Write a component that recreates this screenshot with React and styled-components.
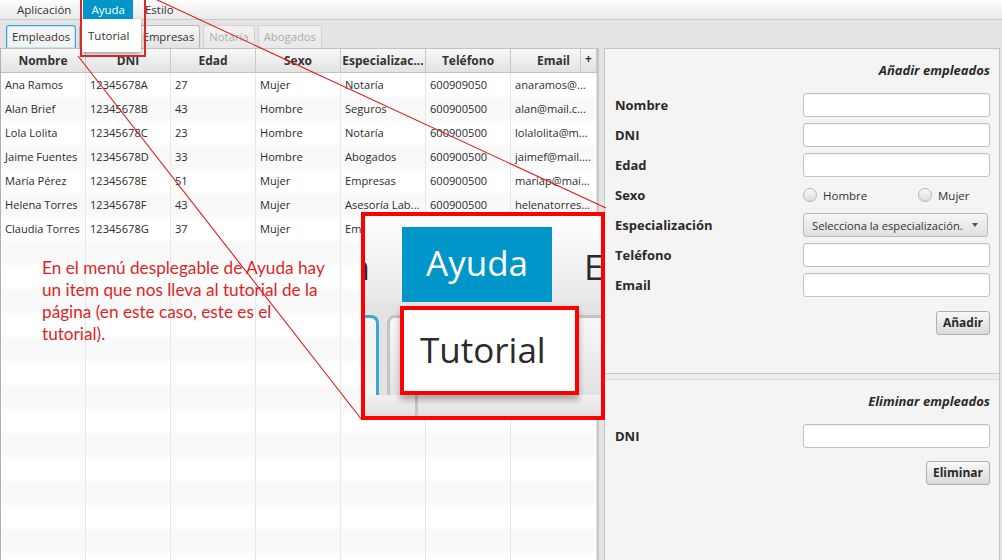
import React from 'react'
import styled, { createGlobalStyle } from 'styled-components'

const GlobalStyle = createGlobalStyle`
  html, body {
    margin: 0;
    padding: 0;
  }
  body {
    background: #e4e4e4;
    font-family: 'Open Sans', 'Liberation Sans', sans-serif;
  }
`

const Window = styled.div`
  position: relative;
  width: 1002px;
  height: 560px;
  overflow: hidden;
  background: #e4e4e4;
  font-size: 11.5px;
  color: #333;
`

const MenuBar = styled.div`
  display: flex;
  height: 20px;
  padding-left: 9px;
  gap: 4px;
  background: linear-gradient(#fdfdfd, #e9e9e9);
  border-bottom: 1px solid #c8c8c8;
  box-sizing: border-box;
`

const MenuItem = styled.div`
  padding: 0 8px;
  height: 19px;
  line-height: 19px;
  color: ${p => (p.$active ? '#fff' : '#333')};
  background: ${p => (p.$active ? '#0096c9' : 'transparent')};
`

const Main = styled.div`
  display: flex;
  height: 540px;
`

const LeftPane = styled.div`
  width: 599px;
  display: flex;
  flex-direction: column;
`

const TabHeader = styled.div`
  display: flex;
  align-items: flex-end;
  gap: 3px;
  height: 28px;
  padding-left: 6px;
  box-sizing: border-box;
`

const Tab = styled.div`
  height: 23px;
  line-height: 22px;
  padding: 0 5px;
  box-sizing: border-box;
  font-size: 11.3px;
  border: 1px solid ${p => (p.$selected ? '#3aa6da' : p.$disabled ? '#d2d2d2' : '#b7b7b7')};
  border-bottom: none;
  border-radius: 3px 3px 0 0;
  color: ${p => (p.$disabled ? '#acacac' : '#333')};
  background: ${p =>
    p.$selected ? '#f4f4f4' : p.$disabled ? 'linear-gradient(#f2f2f2, #e8e8e8)' : 'linear-gradient(#f8f8f8, #e2e2e2)'};
  box-shadow: ${p => (p.$selected ? 'inset 0 0 0 1px #bfe3f5' : 'none')};
`

const Table = styled.div`
  flex: 1;
  background: #fff;
  border-left: 1px solid #b0b0b0;
  border-right: 2px solid #c6c6c6;
  overflow: hidden;
`

const cols = '85px 85px 85px 85px 85px 85px 86px'

const HeaderRow = styled.div`
  display: grid;
  grid-template-columns: ${cols};
  height: 25px;
  border-top: 1px solid #c2c2c2;
  box-sizing: border-box;
`

const HeaderCell = styled.div`
  position: relative;
  background: linear-gradient(#f8f8f8, #e2e2e2);
  border-right: 1px solid #c9c9c9;
  border-bottom: 1px solid #c2c2c2;
  font-size: 12px;
  font-weight: 700;
  text-align: center;
  line-height: 23px;
  white-space: nowrap;
  overflow: hidden;
`

const ColumnMenu = styled.div`
  position: absolute;
  right: 0;
  top: 0;
  bottom: 0;
  width: 15px;
  border-left: 1px solid #c9c9c9;
  background: linear-gradient(#f8f8f8, #e2e2e2);
  font-size: 12px;
  line-height: 20px;
  text-align: center;
`

const Row = styled.div`
  display: grid;
  grid-template-columns: ${cols};
  height: 24px;
  background: ${p => (p.$odd ? '#f9f9f9' : '#fff')};
`

const Cell = styled.div`
  border-right: 1px solid #e6e6e6;
  padding-left: 4px;
  font-size: 11.1px;
  line-height: 24px;
  color: #2c2c2c;
  white-space: nowrap;
  overflow: hidden;
`

const RightPane = styled.div`
  width: 396px;
  margin: 28px 0 0 5px;
  border: 1px solid #c4c4c4;
  border-bottom: none;
  background: #f4f4f4;
  box-sizing: border-box;
`

const Section = styled.div`
  height: ${p => (p.$h ? `${p.$h}px` : 'auto')};
  padding: 13px 9px 0 10px;
  box-sizing: border-box;
`

const SectionTitle = styled.div`
  text-align: right;
  font-size: 13px;
  font-weight: 700;
  font-style: italic;
  line-height: 17px;
  color: #2a2a2a;
`

const FormGrid = styled.div`
  display: grid;
  grid-template-columns: 188px 187px;
  grid-auto-rows: 24px;
  row-gap: 6px;
  margin-top: 14px;
`

const Label = styled.div`
  font-size: 13px;
  font-weight: 700;
  line-height: 24px;
  color: #2a2a2a;
`

const Input = styled.div`
  border: 1px solid #c0c0c0;
  border-radius: 3px;
  background: #fff;
  box-shadow: inset 0 1px 1px rgba(0, 0, 0, 0.05);
`

const RadioGroup = styled.div`
  display: flex;
  align-items: center;
`

const RadioItem = styled.div`
  display: flex;
  align-items: center;
  gap: 6px;
  flex: 0 0 ${p => p.$w}px;
  color: #333;
`

const RadioDot = styled.span`
  width: 14px;
  height: 14px;
  border-radius: 50%;
  border: 1px solid #b3b3b3;
  background: linear-gradient(#fafafa, #dedede);
  box-sizing: border-box;
`

const Combo = styled.div`
  display: flex;
  align-items: center;
  justify-content: space-between;
  width: 185px;
  padding: 0 9px 0 8px;
  box-sizing: border-box;
  border: 1px solid #b9b9b9;
  border-radius: 3px;
  background: linear-gradient(#f6f6f6, #dfdfdf);
  font-size: 11.2px;
  color: #333;
  white-space: nowrap;
`

const Caret = styled.span`
  width: 0;
  height: 0;
  border-left: 3.5px solid transparent;
  border-right: 3.5px solid transparent;
  border-top: 4px solid #555;
`

const ButtonRow = styled.div`
  display: flex;
  justify-content: flex-end;
  margin-top: ${p => p.$mt}px;
`

const Button = styled.div`
  height: 24px;
  line-height: 22px;
  padding: 0 6px;
  box-sizing: border-box;
  border: 1px solid #afafaf;
  border-radius: 3px;
  background: linear-gradient(#f8f8f8, #dadada);
  font-size: 12px;
  font-weight: 700;
  color: #2a2a2a;
`

const Divider = styled.div`
  height: 5px;
  border-top: 1px solid #c8c8c8;
  border-bottom: 1px solid #dcdcdc;
  background: #ededed;
`

/* overlays */

const Dropdown = styled.div`
  position: absolute;
  left: 82px;
  top: 19px;
  width: 59px;
  height: 33px;
  padding-left: 6px;
  box-sizing: border-box;
  line-height: 34px;
  background: #fff;
  box-shadow: 0 2px 4px rgba(0, 0, 0, 0.35);
  z-index: 3;
`

const Highlight = styled.div`
  position: absolute;
  left: 80px;
  top: -2px;
  width: 66px;
  height: 59px;
  border: 2px solid #d42a2a;
  box-sizing: border-box;
  z-index: 4;
`

const Note = styled.p`
  position: absolute;
  left: 42px;
  top: 257px;
  margin: 0;
  font-family: Lato, 'Open Sans', sans-serif;
  font-size: 17.2px;
  line-height: 22px;
  color: #e41e1e;
  z-index: 4;
`

const Inset = styled.div`
  position: absolute;
  left: 361px;
  top: 212px;
  width: 244px;
  height: 208px;
  border: 4px solid #ff0000;
  box-sizing: border-box;
  overflow: hidden;
  background: #e3e3e3;
  z-index: 5;
`

const MagMenu = styled.div`
  display: flex;
  align-items: flex-end;
  height: 86px;
  background: linear-gradient(#ffffff, #e8e8e8);
  font-size: 35px;
  color: #2a2a2a;
`

const MagCut = styled.div`
  display: flex;
  justify-content: flex-end;
  width: 38px;
  padding-right: 32px;
  box-sizing: border-box;
  overflow: hidden;
  line-height: 70px;
  white-space: nowrap;
`

const MagActive = styled.div`
  width: 150px;
  height: 75px;
  flex-shrink: 0;
  background: #0096c9;
  color: #fff;
  text-align: center;
  line-height: 72px;
`

const MagPlain = styled.div`
  margin-left: 32px;
  line-height: 70px;
  width: 20px;
  overflow: hidden;
  white-space: nowrap;
`

const MagTabs = styled.div`
  display: flex;
  align-items: flex-end;
  gap: 8px;
  height: 93px;
  padding-top: 12px;
  box-sizing: border-box;
`

const MagTab = styled.div`
  flex-shrink: 0;
  width: ${p => p.$w}px;
  height: 80px;
  border: 3px solid ${p => (p.$selected ? '#3aa6da' : '#c4c4c4')};
  border-bottom: none;
  border-radius: 8px 8px 0 0;
  margin-left: ${p => p.$ml || 0}px;
  background: ${p => (p.$selected ? '#f4f4f4' : 'linear-gradient(#f8f8f8, #e2e2e2)')};
  box-sizing: border-box;
`

const MagHeader = styled.div`
  display: flex;
  height: 21px;
  background: linear-gradient(#f2f2f2, #e0e0e0);
  font-size: 37px;
  font-weight: 700;
  overflow: hidden;
`

const MagCol = styled.div`
  width: ${p => p.$w}px;
  flex-shrink: 0;
  border-right: ${p => (p.$line ? '3px solid #c6c6c6' : 'none')};
  padding-left: ${p => p.$pl || 0}px;
  line-height: 60px;
  padding-top: 16px;
  color: #333;
`

const MagDrop = styled.div`
  position: absolute;
  left: 35px;
  top: 90px;
  width: 179px;
  height: 89px;
  border: 4px solid #ff0000;
  box-sizing: border-box;
  background: #fff;
  box-shadow: 0 5px 6px rgba(0, 0, 0, 0.3);
  padding-left: 16px;
  font-size: 35px;
  line-height: 80px;
  color: #2a2a2a;
`

const Lines = styled.svg`
  position: absolute;
  left: 0;
  top: 0;
  pointer-events: none;
  z-index: 6;
`

const tabs = [
  { name: 'Empleados', selected: true },
  { name: 'Seguros' },
  { name: 'Empresas' },
  { name: 'Notaría', disabled: true },
  { name: 'Abogados', disabled: true },
]

const headers = ['Nombre', 'DNI', 'Edad', 'Sexo', 'Especializac...', 'Teléfono', 'Email']

const people = [
  ['Ana Ramos', '12345678A', '27', 'Mujer', 'Notaría', '600909050', 'anaramos@...'],
  ['Alan Brief', '12345678B', '43', 'Hombre', 'Seguros', '600900500', 'alan@mail.c...'],
  ['Lola Lolita', '12345678C', '23', 'Hombre', 'Notaría', '600900500', 'lolalolita@m...'],
  ['Jaime Fuentes', '12345678D', '33', 'Hombre', 'Abogados', '600900500', 'jaimef@mail....'],
  ['María Pérez', '12345678E', '51', 'Mujer', 'Empresas', '600900500', 'mariap@mai...'],
  ['Helena Torres', '12345678F', '43', 'Mujer', 'Asesoría Lab...', '600900500', 'helenatorres...'],
  ['Claudia Torres', '12345678G', '37', 'Mujer', 'Empresas', '600900500', 'claudiat@...'],
]

const rows = [...people, ...Array.from({ length: 14 }, () => ['', '', '', '', '', '', ''])]

const App = () => (
  <Window>
    <GlobalStyle />
    <MenuBar>
      <MenuItem>Aplicación</MenuItem>
      <MenuItem $active>Ayuda</MenuItem>
      <MenuItem>Estilo</MenuItem>
    </MenuBar>

    <Main>
      <LeftPane>
        <TabHeader>
          {tabs.map(t => (
            <Tab key={t.name} $selected={t.selected} $disabled={t.disabled}>
              {t.name}
            </Tab>
          ))}
        </TabHeader>
        <Table>
          <HeaderRow>
            {headers.map((h, i) => (
              <HeaderCell key={h}>
                {h}
                {i === headers.length - 1 && <ColumnMenu>+</ColumnMenu>}
              </HeaderCell>
            ))}
          </HeaderRow>
          {rows.map((r, i) => (
            <Row key={i} $odd={i % 2 === 1}>
              {r.map((c, j) => (
                <Cell key={j}>{c}</Cell>
              ))}
            </Row>
          ))}
        </Table>
      </LeftPane>

      <RightPane>
        <Section $h={324}>
          <SectionTitle>Añadir empleados</SectionTitle>
          <FormGrid>
            <Label>Nombre</Label>
            <Input />
            <Label>DNI</Label>
            <Input />
            <Label>Edad</Label>
            <Input />
            <Label>Sexo</Label>
            <RadioGroup>
              <RadioItem $w={115}>
                <RadioDot />
                Hombre
              </RadioItem>
              <RadioItem $w={60}>
                <RadioDot />
                Mujer
              </RadioItem>
            </RadioGroup>
            <Label>Especialización</Label>
            <Combo>
              Selecciona la especialización.
              <Caret />
            </Combo>
            <Label>Teléfono</Label>
            <Input />
            <Label>Email</Label>
            <Input />
          </FormGrid>
          <ButtonRow $mt={14}>
            <Button>Añadir</Button>
          </ButtonRow>
        </Section>
        <Divider />
        <Section>
          <SectionTitle>Eliminar empleados</SectionTitle>
          <FormGrid>
            <Label>DNI</Label>
            <Input />
          </FormGrid>
          <ButtonRow $mt={13}>
            <Button>Eliminar</Button>
          </ButtonRow>
        </Section>
      </RightPane>
    </Main>

    <Dropdown>Tutorial</Dropdown>
    <Highlight />

    <Note>
      En el menú desplegable de Ayuda hay
      <br />
      un item que nos lleva al tutorial de la
      <br />
      página (en este caso, este es el
      <br />
      tutorial).
    </Note>

    <Inset>
      <MagMenu>
        <MagCut>Aplicación</MagCut>
        <MagActive>Ayuda</MagActive>
        <MagPlain>Estilo</MagPlain>
      </MagMenu>
      <MagTabs>
        <MagTab $w={40} $ml={-26} $selected />
        <MagTab $w={170} />
        <MagTab $w={60} />
      </MagTabs>
      <MagHeader>
        <MagCol $w={50} $line />
        <MagCol $w={200} $pl={96}>
          DNI
        </MagCol>
      </MagHeader>
      <MagDrop>Tutorial</MagDrop>
    </Inset>

    <Lines width="1002" height="560" viewBox="0 0 1002 560">
      <line x1="140" y1="-8" x2="606" y2="208" stroke="#e01818" strokeWidth="1.1" />
      <line x1="78" y1="56" x2="362" y2="420" stroke="#e01818" strokeWidth="1.1" />
    </Lines>
  </Window>
)

export default App
